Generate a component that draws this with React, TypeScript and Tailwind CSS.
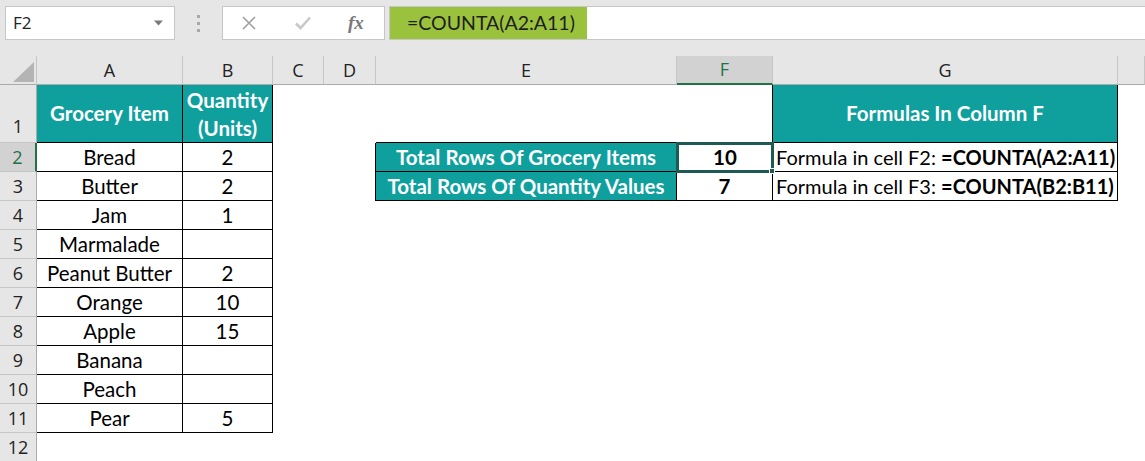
import type { ReactNode } from 'react'

type CellProps = {
  className?: string
  children?: ReactNode
}

const Cell = ({ className = '', children }: CellProps) => (
  <div className={`relative flex min-w-0 items-center overflow-visible whitespace-nowrap ${className}`}>
    {children}
  </div>
)

const columns = ['A', 'B', 'C', 'D', 'E', 'F', 'G', '']

const groceries: Array<[string, string]> = [
  ['Bread', '2'],
  ['Butter', '2'],
  ['Jam', '1'],
  ['Marmalade', ''],
  ['Peanut Butter', '2'],
  ['Orange', '10'],
  ['Apple', '15'],
  ['Banana', ''],
  ['Peach', ''],
  ['Pear', '5'],
]

const FormulaBar = () => (
  <div className="relative h-[56px] bg-[#e6e6e6] font-['Open_Sans',sans-serif]">
    <div className="flex items-start pt-[6px]">
      <div className="ml-[5px] flex h-[34px] w-[170px] items-center justify-between border border-[#c6c6c6] bg-white pl-[7px] pr-[10px]">
        <span className="text-[17px] text-[#222]">F2</span>
        <svg width="9" height="6" viewBox="0 0 9 6" className="mr-[1px]">
          <path d="M0 0.5 L9 0.5 L4.5 5.5 Z" fill="#7a7a7a" />
        </svg>
      </div>
      <div className="flex h-[34px] w-[47px] flex-col items-center justify-center gap-[4px]">
        <span className="h-[3px] w-[3px] bg-[#a8a8a8]" />
        <span className="h-[3px] w-[3px] bg-[#a8a8a8]" />
        <span className="h-[3px] w-[3px] bg-[#a8a8a8]" />
      </div>
      <div className="flex h-[34px] w-[163px] items-center border border-[#c6c6c6] bg-white">
        <svg width="16" height="16" viewBox="0 0 16 16" className="ml-[18px]">
          <path d="M2 2 L14 14 M14 2 L2 14" stroke="#a0a0a0" strokeWidth="1.6" />
        </svg>
        <svg width="18" height="16" viewBox="0 0 18 16" className="ml-[37px]">
          <path d="M2 8.5 L6.5 13 L16 2.5" stroke="#c8c8c8" strokeWidth="2.6" fill="none" />
        </svg>
        <span className="ml-[36px] font-['Liberation_Serif',serif] text-[19px] font-bold italic text-[#7a7a7a]">
          fx
        </span>
      </div>
      <div className="ml-[4px] flex h-[34px] flex-1 items-stretch border border-r-0 border-[#c6c6c6] bg-white">
        <div className="flex w-[197px] items-center bg-[#9bc23c] pl-[17px] font-['Lato',sans-serif] text-[19.5px] text-[#1e1e1e]">
          =COUNTA(A2:A11)
        </div>
      </div>
    </div>
  </div>
)

const App = () => {
  const black = 'border-black'
  const teal = 'bg-[#0fa09e] text-white font-bold'

  return (
    <div className="h-[461px] w-[1145px] overflow-hidden bg-white">
      <FormulaBar />
      <div className="grid grid-cols-[37px_146px_90px_51px_52px_301px_96px_345px_1fr] grid-rows-[29px_58px_repeat(11,29px)] font-['Lato',sans-serif] text-[20.5px] text-black">
        {/* column headers */}
        <Cell className="border-r border-b border-r-[#c6c6c6] border-b-[#ababab] bg-[#e6e6e6]">
          <svg width="37" height="28" viewBox="0 0 37 28" className="absolute left-0 top-0">
            <path d="M13 26 L34 26 L34 6 Z" fill="#b4b4b4" />
          </svg>
        </Cell>
        {columns.map((col) =>
          col === 'F' ? (
            <Cell
              key={col}
              className="justify-center border-r border-b-2 border-r-[#c6c6c6] border-b-[#217346] bg-[#d2d2d2] font-['Open_Sans',sans-serif] text-[18px] text-[#217346]"
            >
              {col}
            </Cell>
          ) : (
            <Cell
              key={col || 'H'}
              className="justify-center border-r border-b border-r-[#c6c6c6] border-b-[#ababab] bg-[#e6e6e6] font-['Open_Sans',sans-serif] text-[18px] text-[#222]"
            >
              {col}
            </Cell>
          ),
        )}

        {/* row 1 */}
        <Cell className="items-end justify-center border-r border-b border-r-[#ababab] border-b-[#c6c6c6] bg-[#e6e6e6] pb-[2px] font-['Open_Sans',sans-serif] text-[18px] text-[#222]">
          1
        </Cell>
        <Cell className={`justify-center border-r border-b ${black} ${teal}`}>Grocery Item</Cell>
        <Cell className={`flex-col justify-center border-r border-b leading-[28px] ${black} ${teal}`}>
          <span>Quantity</span>
          <span>(Units)</span>
        </Cell>
        <Cell />
        <Cell />
        <Cell className={`border-b ${black}`} />
        <Cell className={`border-r border-b ${black}`} />
        <Cell className={`justify-center border-r border-b ${black} ${teal}`}>Formulas In Column F</Cell>
        <Cell />

        {/* rows 2 - 11 */}
        {groceries.map(([item, qty], index) => {
          const row = index + 2
          return [
            row === 2 ? (
              <Cell
                key={`h${row}`}
                className="justify-center border-r-2 border-b border-r-[#217346] border-b-[#c6c6c6] bg-[#d2d2d2] font-['Open_Sans',sans-serif] text-[18px] text-[#217346]"
              >
                {row}
              </Cell>
            ) : (
              <Cell
                key={`h${row}`}
                className="justify-center border-r border-b border-r-[#ababab] border-b-[#c6c6c6] bg-[#e6e6e6] font-['Open_Sans',sans-serif] text-[18px] text-[#222]"
              >
                {row}
              </Cell>
            ),
            <Cell key={`a${row}`} className={`justify-center border-r border-b ${black}`}>
              {item}
            </Cell>,
            <Cell key={`b${row}`} className={`justify-center border-r border-b ${black}`}>
              {qty}
            </Cell>,
            <Cell key={`c${row}`} />,
            <Cell key={`d${row}`} className={row <= 3 ? `border-r ${black}` : ''} />,
            row === 2 ? (
              <Cell key={`e${row}`} className={`justify-center border-r border-b ${black} ${teal}`}>
                Total Rows Of Grocery Items
              </Cell>
            ) : row === 3 ? (
              <Cell key={`e${row}`} className={`justify-center border-r border-b ${black} ${teal}`}>
                Total Rows Of Quantity Values
              </Cell>
            ) : (
              <Cell key={`e${row}`} />
            ),
            row === 2 ? (
              <Cell
                key={`f${row}`}
                className="z-10 -mt-[1px] -ml-[1px] mr-[-1px] mb-[-1px] justify-center border-[3px] border-[#1d5a53] font-bold"
              >
                10
                <span className="absolute -bottom-[4px] -right-[4px] h-[6px] w-[6px] border border-white bg-[#1d5a53]" />
              </Cell>
            ) : row === 3 ? (
              <Cell key={`f${row}`} className={`justify-center border-r border-b font-bold ${black}`}>
                7
              </Cell>
            ) : (
              <Cell key={`f${row}`} />
            ),
            row === 2 ? (
              <Cell key={`g${row}`} className={`border-r border-b pl-[3px] text-[20px] ${black}`}>
                Formula in cell F2:&nbsp;<b>=COUNTA(A2:A11)</b>
              </Cell>
            ) : row === 3 ? (
              <Cell key={`g${row}`} className={`border-r border-b pl-[3px] text-[20px] ${black}`}>
                Formula in cell F3:&nbsp;<b>=COUNTA(B2:B11)</b>
              </Cell>
            ) : (
              <Cell key={`g${row}`} />
            ),
            <Cell key={`x${row}`} />,
          ]
        })}

        {/* row 12 */}
        <Cell className="justify-center border-r border-b border-r-[#ababab] border-b-[#c6c6c6] bg-[#e6e6e6] font-['Open_Sans',sans-serif] text-[18px] text-[#222]">
          12
        </Cell>
      </div>
    </div>
  )
}

export default App
